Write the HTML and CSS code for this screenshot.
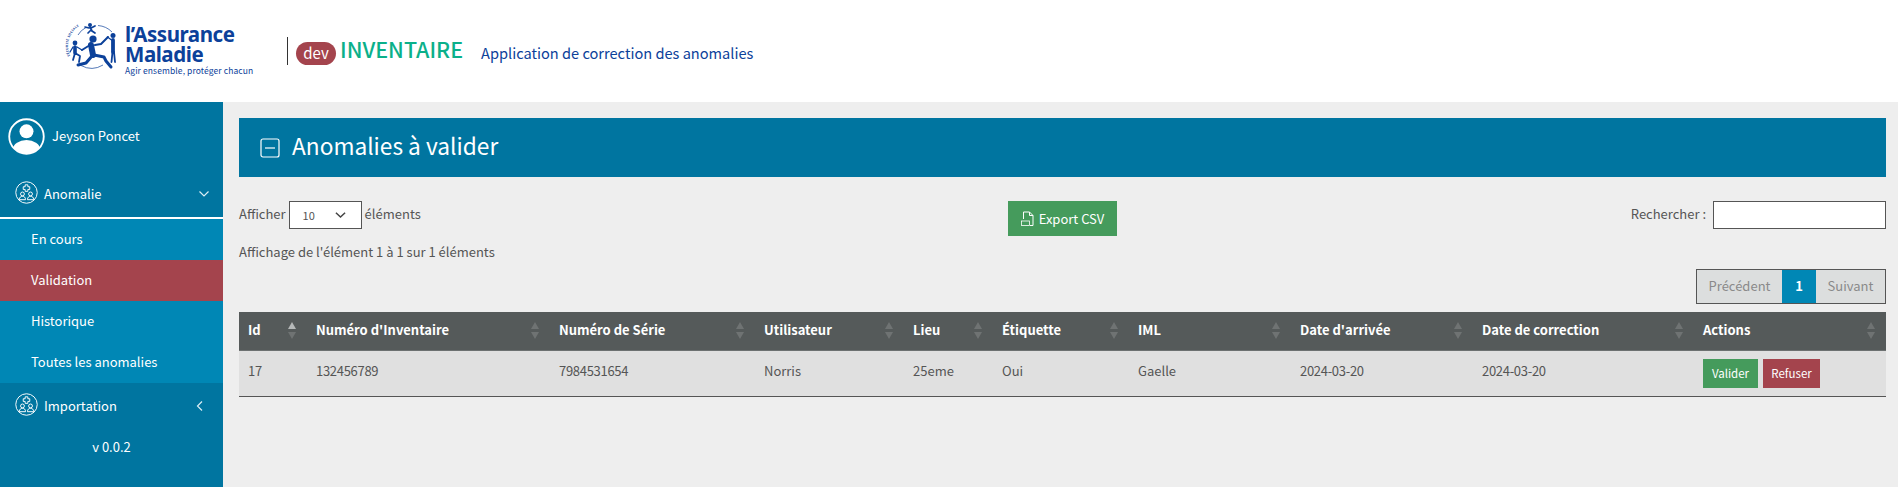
FILE: index.html
```html
<!DOCTYPE html>
<html lang="fr">
<head>
<meta charset="utf-8">
<title>Anomalies à valider</title>
<link rel="stylesheet" href="styles.css">
</head>
<body>
<svg class="sprites" width="0" height="0" aria-hidden="true">
  <symbol id="group" viewBox="0 0 24 24">
    <g fill="none" stroke="currentColor" stroke-width="1">
      <circle cx="12" cy="12" r="11.200"/>
      <path d="M10.600 4h2.800v2h2v2.800h-2v2h-2.800v-2h-2V6h2z"/>
      <circle cx="7.800" cy="13.500" r="2"/>
      <circle cx="16.200" cy="13.500" r="2"/>
      <path d="M4.500 19.500c0-2.500 1.500-3.500 3.300-3.500s3.200 1 3.200 3.500zM13 19.500c0-2.500 1.400-3.500 3.200-3.500s3.300 1 3.300 3.500z"/>
    </g>
  </symbol>
</svg>
<header class="topbar">
  <div class="logo">
    <svg class="logo-mark" viewBox="0 0 55 52" aria-hidden="true">
      <defs><path id="arc" d="M5 38A24 24 0 0 1 30 4.500"/></defs>
      <text class="logo-arc"><textPath href="#arc">SÉCURITÉ SOCIALE</textPath></text>
      <g fill="none" stroke="#0c419a" stroke-width=".7">
        <path d="M33 7.500A22 22 0 0 1 47 14"/>
        <path d="M16 47.500A22 22 0 0 0 38 47"/>
        <path d="M13 17A19 19 0 0 1 21 9.500"/>
      </g>
      <g fill="#0c419a">
        <circle cx="28" cy="21" r="3.600"/>
        <circle cx="10" cy="25" r="2.400"/>
        <circle cx="48" cy="17.500" r="2.500"/>
        <circle cx="25" cy="7" r="2"/>
      </g>
      <g fill="none" stroke="#0c419a" stroke-linecap="round" stroke-linejoin="round">
        <path d="M26 27l2 10" stroke-width="6"/>
        <path d="M25 27l-8 5M30 27l6-1 7-7" stroke-width="2"/>
        <path d="M27 38l-6 7-8 2" stroke-width="3"/>
        <path d="M29 37l10 2 2 4 5 6" stroke-width="3"/>
        <path d="M10 29v6" stroke-width="3.600"/>
        <path d="M10 35l-2 7M10 35l5 3-1 6" stroke-width="1.800"/>
        <path d="M8 29l-3 5M12 29l5 3" stroke-width="1.300"/>
        <path d="M48 22v12" stroke-width="3.800"/>
        <path d="M47.500 34l-1 10M49 34l1 10" stroke-width="1.800"/>
        <path d="M46.500 22l-4-3" stroke-width="1.300"/>
        <path d="M25 9l2 4M24 10l-4-1M26 10l4-2M26 12l-3 3M27 13l3 2" stroke-width="1.700"/>
      </g>
    </svg>
    <div class="logo-text">
      <div class="logo-name">l’Assurance<br>Maladie</div>
      <div class="logo-tag">Agir ensemble, protéger chacun</div>
    </div>
  </div>
  <div class="brand">
    <span class="pill">dev</span>
    <span class="app-name">INVENTAIRE</span>
  </div>
  <span class="app-desc">Application de correction des anomalies</span>
</header>

<div class="layout">
  <aside class="sidebar">
    <div class="user">
      <svg class="user-icon" viewBox="0 0 36 36" aria-hidden="true">
        <defs><clipPath id="uc"><circle cx="18" cy="18" r="16.500"/></clipPath></defs>
        <circle cx="18" cy="18" r="16.800" fill="none" stroke="#fff" stroke-width="1.800"/>
        <circle cx="18" cy="13" r="6.800" fill="#fff"/>
        <ellipse cx="18" cy="30" rx="13" ry="8.500" fill="#fff" clip-path="url(#uc)"/>
      </svg>
      <span>Jeyson Poncet</span>
    </div>
    <div class="menu-row menu-open">
      <svg class="menu-icon"><use href="#group"/></svg>
      <span class="menu-label">Anomalie</span>
      <svg class="chev" viewBox="0 0 12 12" aria-hidden="true"><path d="M1.500 3.500 6 8l4.500-4.500"/></svg>
    </div>
    <nav class="submenu">
      <a class="sub-item">En cours</a>
      <a class="sub-item sub-active">Validation</a>
      <a class="sub-item">Historique</a>
      <a class="sub-item">Toutes les anomalies</a>
    </nav>
    <div class="menu-row menu-closed">
      <svg class="menu-icon"><use href="#group"/></svg>
      <span class="menu-label">Importation</span>
      <svg class="chev chev-left" viewBox="0 0 12 12" aria-hidden="true"><path d="M8 1.500 3.500 6 8 10.500"/></svg>
    </div>
    <div class="version">v 0.0.2</div>
  </aside>

  <main class="content">
    <section class="card-head">
      <svg class="collapse" viewBox="0 0 20 20" aria-hidden="true"><rect x="1" y="1" width="18" height="18" rx="2"/><path d="M5 10h10"/></svg>
      <h1>Anomalies à valider</h1>
    </section>

    <div class="controls">
      <div class="length">
        <span>Afficher</span>
        <span class="select"><span>10</span><svg viewBox="0 0 12 8" aria-hidden="true"><path d="M1 1.500 6 6.300l5-4.800"/></svg></span>
        <span>éléments</span>
      </div>
      <button class="btn export">
        <svg class="csv" viewBox="0 0 14 16" aria-hidden="true">
          <path d="M2.500 8V1h6l3.500 3.500V14.500H9"/><path d="M8.500 1v3.500H12"/>
          <rect x=".5" y="10" width="8" height="4.500" fill="#459b5c" stroke-width=".8"/>
        </svg>
        Export CSV
      </button>
      <div class="search">
        <span>Rechercher :</span>
        <span class="input"></span>
      </div>
    </div>

    <div class="info">Affichage de l'élément 1 à 1 sur 1 éléments</div>

    <div class="pager-row">
      <div class="pager">
        <span class="page page-off">Précédent</span>
        <span class="page page-on">1</span>
        <span class="page page-off">Suivant</span>
      </div>
    </div>

    <table class="grid">
      <colgroup>
        <col class="c1"><col class="c2"><col class="c3"><col class="c4"><col class="c5">
        <col class="c6"><col class="c7"><col class="c8"><col class="c9"><col class="c10">
      </colgroup>
      <thead>
        <tr>
          <th><div class="th"><span>Id</span><span class="sort sort-asc"></span></div></th>
          <th><div class="th"><span>Numéro d'Inventaire</span><span class="sort"></span></div></th>
          <th><div class="th"><span>Numéro de Série</span><span class="sort"></span></div></th>
          <th><div class="th"><span>Utilisateur</span><span class="sort"></span></div></th>
          <th><div class="th"><span>Lieu</span><span class="sort"></span></div></th>
          <th><div class="th"><span>Étiquette</span><span class="sort"></span></div></th>
          <th><div class="th"><span>IML</span><span class="sort"></span></div></th>
          <th><div class="th"><span>Date d'arrivée</span><span class="sort"></span></div></th>
          <th><div class="th"><span>Date de correction</span><span class="sort"></span></div></th>
          <th><div class="th"><span>Actions</span><span class="sort"></span></div></th>
        </tr>
      </thead>
      <tbody>
        <tr>
          <td class="num">17</td><td class="num">132456789</td><td class="num">7984531654</td><td>Norris</td><td>25eme</td>
          <td>Oui</td><td>Gaelle</td><td class="num">2024-03-20</td><td class="num">2024-03-20</td>
          <td><div class="actions"><button class="btn small ok">Valider</button><button class="btn small ko">Refuser</button></div></td>
        </tr>
      </tbody>
    </table>
  </main>
</div>
</body>
</html>
```
FILE: styles.css
```css
* { box-sizing: border-box; }
html, body { margin: 0; height: 100%; overflow: hidden; }
body {
  display: flex;
  flex-direction: column;
  background: #eee;
  color: #555;
  font-family: "Noto Sans CJK SC", "Noto Sans", sans-serif;
  font-size: 13px;
  line-height: 20px;
}
.sprites { position: absolute; }

.topbar {
  flex: none;
  height: 102px;
  background: #fff;
  display: flex;
  align-items: flex-start;
}
.logo { display: flex; margin: 18px 0 0 65px; width: 222px; }
.logo-mark { width: 55px; height: 52px; flex: none; }
.logo-arc { font-family: "Noto Sans", sans-serif; font-size: 3.200px; font-weight: 700; fill: #0c419a; letter-spacing: .3px; }
.logo-text { color: #0c419a; padding-top: 7px; margin-left: 5px; }
.logo-name { font-family: "Noto Sans", sans-serif; font-size: 20.500px; line-height: 19.500px; font-weight: 700; letter-spacing: -.45px; }
.logo-tag { font-size: 8.500px; line-height: 12px; letter-spacing: .1px; white-space: nowrap; }

.brand {
  margin-top: 37px;
  height: 28px;
  border-left: 1px solid #333;
  padding-left: 8px;
  display: flex;
  align-items: center;
  gap: 4px;
}
.pill {
  width: 40px;
  height: 23px;
  margin-top: 4px;
  border-radius: 12px;
  background: #a4444d;
  color: #fff;
  font-size: 15px;
  line-height: 22px;
  text-align: center;
}
.app-name { color: #0bb08a; font-size: 21.500px; font-weight: 500; line-height: 28px; margin-top: -5px; }
.app-desc { color: #0c419a; font-size: 14.600px; line-height: 24px; margin: 41px 0 0 18px; }

.layout { flex: 1; display: flex; min-height: 0; }
.sidebar { flex: none; width: 223px; background: #0075a0; color: #fff; }
.user {
  height: 64px;
  padding: 4px 0 0 8px;
  display: flex;
  align-items: center;
  gap: 7px;
}
.user-icon { width: 37px; height: 37px; flex: none; }
.menu-row {
  height: 48px;
  padding-left: 15px;
  display: flex;
  align-items: center;
}
.menu-open { height: 53px; border-bottom: 2px solid #fff; padding-top: 5px; }
.menu-closed { padding-bottom: 2px; }
.menu-icon { width: 23px; height: 23px; color: #fff; flex: none; margin-right: 6px; margin-top: -4px; }
.menu-label { flex: 1; }
.chev { width: 12px; height: 12px; margin-right: 13px; fill: none; stroke: #dbeef5; stroke-width: 1.200; }
.chev-left { margin-right: 17px; }
.submenu { background: #0087b5; display: flex; flex-direction: column; }
.sub-item { height: 41px; padding: 0 0 2px 31px; display: flex; align-items: center; color: #fff; }
.sub-active { background: #a4444d; }
.version { text-align: center; margin-top: 6px; }

.content { flex: 1; min-width: 0; padding: 16px 12px 0 16px; }
.card-head {
  height: 59px;
  background: #0075a0;
  color: #fff;
  display: flex;
  align-items: center;
  padding-left: 21px;
  gap: 12px;
}
.card-head h1 { margin: 0; padding-bottom: 3px; font-size: 22.700px; line-height: 32px; font-weight: 400; }
.collapse { width: 20px; height: 20px; fill: none; stroke: #fff; stroke-width: 1.200; }

.controls {
  display: grid;
  grid-template-columns: 1fr auto 1fr;
  align-items: start;
  margin-top: 24px;
}
.length { display: flex; align-items: center; gap: 3px; height: 28px; }
.length > span:not(.select), .search > span:not(.input) { padding-bottom: 2px; }
.select {
  width: 73px;
  height: 28px;
  border: 1px solid #555;
  background: #fff;
  padding: 0 15px 0 13px;
  display: flex;
  align-items: center;
  justify-content: space-between;
  font-size: 11px;
}
.select svg { width: 11px; height: 8px; fill: none; stroke: #444; stroke-width: 1.600; }
.btn { border: 0; font-family: inherit; color: #fff; display: inline-flex; align-items: center; justify-content: center; }
.export { width: 109px; height: 35px; background: #459b5c; font-size: 13px; gap: 4px; }
.csv { width: 14px; height: 16px; fill: none; stroke: #fff; stroke-width: 1; }
.search { display: flex; justify-content: flex-end; align-items: center; gap: 7px; height: 28px; }
.input { width: 173px; height: 28px; border: 1px solid #555; background: #fff; }

.info { margin-top: 6px; height: 20px; }
.pager-row { display: flex; justify-content: flex-end; margin-top: 7px; }
.pager { display: flex; height: 35px; border: 1px solid #555; background: #dcdede; }
.page { display: flex; align-items: center; justify-content: center; padding-bottom: 2px; }
.page-off { color: #8a8a8a; }
.page-off:first-child { width: 85px; }
.page-off:last-child { width: 69px; }
.page-on { width: 34px; background: #0087b5; color: #fff; font-weight: 700; }

.grid { width: 1647px; margin-top: 8px; border-collapse: collapse; table-layout: fixed; }
.c1 { width: 68px; } .c2 { width: 243px; } .c3 { width: 205px; } .c4 { width: 149px; } .c5 { width: 89px; }
.c6 { width: 136px; } .c7 { width: 162px; } .c8 { width: 182px; } .c9 { width: 221px; } .c10 { width: 192px; }
.grid th {
  height: 38px;
  padding: 0 11px 0 9px;
  background: #555a5a;
  border-bottom: 1px solid #6d7171;
  color: #fff;
  font-weight: 700;
  text-align: left;
}
.th { display: flex; justify-content: space-between; align-items: center; }
.th > span:first-child { padding-bottom: 1px; }
.sort { display: flex; flex-direction: column; gap: 3px; width: 8px; }
.sort::before, .sort::after { content: ""; border-left: 4px solid transparent; border-right: 4px solid transparent; }
.sort::before { border-bottom: 7px solid #6f7373; }
.sort::after { border-top: 7px solid #6f7373; }
.sort-asc::before { border-bottom-color: #b5b8b8; }
.grid td {
  height: 46px;
  padding: 0 9px 4px;
  background: #e0e0e0;
  border-bottom: 1px solid #555;
}
.grid .num { letter-spacing: -.3px; }
.actions { display: flex; gap: 5px; margin-bottom: -4px; }
.small { height: 29px; font-size: 11.500px; padding-bottom: 2px; }
.ok { width: 55px; background: #459b5c; }
.ko { width: 57px; background: #a4444d; }
```
